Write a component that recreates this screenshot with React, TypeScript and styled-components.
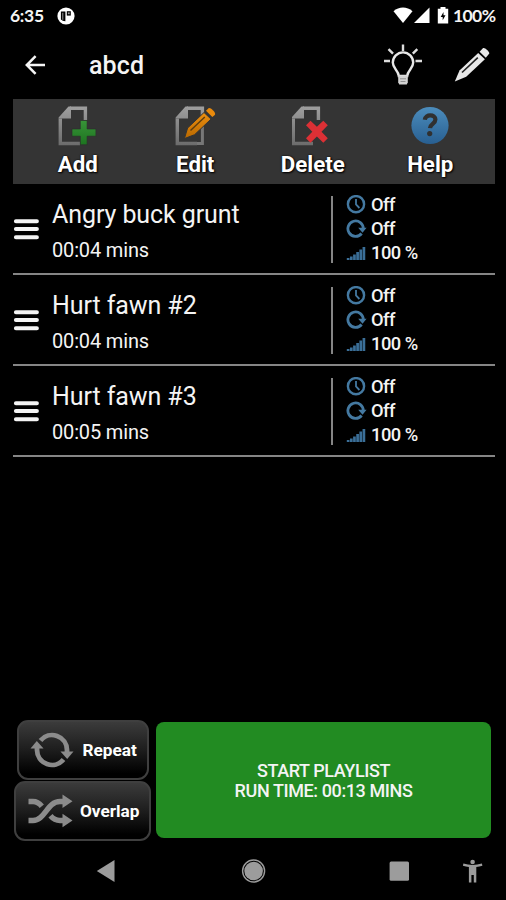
import React from 'react';
import styled, { createGlobalStyle } from 'styled-components';

const GlobalStyle = createGlobalStyle`
  * { box-sizing: border-box; }
  html, body { margin: 0; background: #000; }
  body { font-family: Roboto, "Liberation Sans", sans-serif; color: #f4f4f4; }
  button { font: inherit; color: inherit; border: 0; background: none; padding: 0; margin: 0; }
  svg { display: block; flex: none; }
`;

const Screen = styled.div`
  width: 506px;
  height: 900px;
  background: #000;
  display: flex;
  flex-direction: column;
  overflow: hidden;
  white-space: nowrap;
`;

const StatusBar = styled.div`
  height: 32px;
  flex: none;
  display: flex;
  align-items: center;
  padding: 0 9px 0 10px;
  font: 700 17.5px/32px Lato, sans-serif;
`;

const Clock = styled.span`
  width: 47px;
  letter-spacing: -0.3px;
`;

const StatusIcons = styled.div`
  margin-left: auto;
  display: flex;
  align-items: center;
`;

const BatteryText = styled.span`
  margin-left: 4px;
  width: 44px;
  letter-spacing: -0.6px;
`;

const Header = styled.header`
  height: 67px;
  flex: none;
  display: flex;
  align-items: center;
  padding: 0 15px 1px 22px;
`;

const Title = styled.h1`
  margin: 2px auto 0 41px;
  font-size: 25px;
  line-height: 30px;
  font-weight: 500;
  letter-spacing: 0.1px;
`;

const IconButton = styled.button<{ $gap?: number }>`
  margin-left: ${({ $gap = 0 }) => $gap}px;
`;

const Toolbar = styled.nav`
  height: 85px;
  flex: none;
  margin: 0 11px 0 13px;
  padding: 6px 6px 0;
  background: #343434;
  display: grid;
  grid-template-columns: repeat(4, 1fr);
`;

const Tool = styled.button`
  display: flex;
  flex-direction: column;
  align-items: center;
  gap: 5px;
`;

const ToolLabel = styled.span`
  font-size: 22.3px;
  line-height: 26px;
  font-weight: 700;
  color: #fff;
  text-shadow: 1px 1px 2px #000, 0 0 2px #000;
`;

const List = styled.main`
  flex: 1;
  margin: 0 11px 0 13px;
`;

const Row = styled.article`
  height: 91px;
  border-bottom: 2px solid #858585;
  display: grid;
  grid-template-columns: 39px 279px 15px 1fr;
`;

const Handle = styled.div`
  padding-top: 33px;
`;

const TrackText = styled.div`
  padding-top: 16px;
`;

const TrackName = styled.div`
  font-size: 25px;
  line-height: 30px;
  letter-spacing: -0.08px;
`;

const Duration = styled.div`
  margin-top: 8px;
  font-size: 20px;
  line-height: 24px;
  letter-spacing: -0.15px;
`;

const Divider = styled.div`
  width: 2px;
  height: 67px;
  margin-top: 12px;
  background: #858585;
`;

const Stats = styled.div`
  padding-top: 9px;
`;

const Stat = styled.div`
  height: 24px;
  display: flex;
  align-items: center;
  gap: 4px;
  font-size: 18.3px;
  line-height: 24px;
  font-weight: 500;
  letter-spacing: -0.5px;
`;

const Footer = styled.footer`
  height: 122px;
  flex: none;
  display: flex;
  gap: 5px;
  padding: 0 15px 0 14px;
`;

const Toggles = styled.div`
  width: 137px;
  display: flex;
  flex-direction: column;
  align-items: center;
  gap: 1px;
`;

const Toggle = styled.button<{ $width: number; $gap: number }>`
  width: ${({ $width }) => $width}px;
  height: 60px;
  display: flex;
  align-items: center;
  gap: ${({ $gap }) => $gap}px;
  padding-left: 11px;
  border: 2px solid #3f3f3f;
  border-radius: 11px;
  background: linear-gradient(#3b3b3b, #1d1d1d 50%, #000 92%);
  font-size: 17.2px;
  line-height: 20px;
  font-weight: 700;
  color: #fff;
`;

const StartButton = styled.button`
  flex: 1;
  height: 116px;
  margin-top: 2px;
  padding-top: 2px;
  border-radius: 8px;
  background: #228b22;
  font-size: 18px;
  line-height: 20px;
  font-weight: 500;
  letter-spacing: -0.4px;
`;

const NavBar = styled.div`
  height: 58px;
  flex: none;
  display: grid;
  grid-template-columns: 212px 83px 166px 1fr;
`;

const NavItem = styled.button<{ $pad: number }>`
  display: flex;
  padding: 16px 0 0 ${({ $pad }) => $pad}px;
`;

const Page = () => (
  <>
    <path d="M12 2.3H27.4V14M22 37.5H2.3V12.5" fill="none" stroke="url(#pageFill)" strokeWidth="3.4" />
    <path d="M.6 11.5 10.5 .6H13v12H.6z" fill="url(#pageFill)" />
  </>
);

const Gradients = () => (
  <defs>
    <linearGradient id="pageFill" gradientUnits="userSpaceOnUse" x1="0" y1="0" x2="0" y2="39">
      <stop stopColor="#a0a0a0" /><stop offset="1" stopColor="#6c6c6c" />
    </linearGradient>
    <linearGradient id="orange" x1="0" y1="0" x2="0" y2="1">
      <stop stopColor="#ee9010" /><stop offset="1" stopColor="#b86800" />
    </linearGradient>
    <linearGradient id="blue" x1="0" y1="0" x2="0" y2="1">
      <stop stopColor="#4c8dbd" /><stop offset="1" stopColor="#285f91" />
    </linearGradient>
    <linearGradient id="green" x1="0" y1="0" x2="0" y2="1">
      <stop stopColor="#389438" /><stop offset="1" stopColor="#1d7420" />
    </linearGradient>
  </defs>
);

const AddIcon = () => (
  <svg width="40" height="41" viewBox="0 -1 40 41">
    <Gradients /><Page />
    <path d="M22.3 14.5h6.8v8.500h8.800v7.200h-8.800v8.500h-6.800v-8.500H14v-7.200h8.300z" fill="url(#green)" stroke="#2c2c2c" strokeWidth=".6" />
  </svg>
);

const EditIcon = () => (
  <svg width="42" height="41" viewBox="-1 -1 42 41">
    <Page /><path d="M22 37.5h5.400V19" fill="none" stroke="#777" strokeWidth="3" />
    <path d="M9.4 32.6 12.6 22 29 6.5l7 6.6L19.6 28.7z" fill="url(#orange)" stroke="#333" strokeWidth="1" />
    <path d="m31 4.8 2.6-2.5c1.5-1.4 8 4.6 6.2 6.6L37.3 11z" fill="#e98a0c" />
    <path d="M15.5 24.5 29.8 11" stroke="#5b3c10" strokeWidth="1.4" />
  </svg>
);

const DeleteIcon = () => (
  <svg width="41" height="41" viewBox="1 -1 41 41">
    <Page />
    <path d="m19.5 14.8 6.4 6 6.4-6 4.5 4.500-6.300 6.400 6.300 6.500-4.500 4.500-6.400-6.200-6.400 6.200-4.500-4.500 6.300-6.500L15 19.300z" fill="#dc3035" />
  </svg>
);

const HelpIcon = () => (
  <svg width="40" height="41" viewBox="-1 -1 40 41">
    <circle cx="19" cy="19.5" r="18.6" fill="url(#blue)" />
    <path d="M13.8 13.8C14.4 7.8 24.4 8 24.4 13.6c0 4.4-5.2 4.3-5.4 8.6" fill="none" stroke="#303030" strokeWidth="4.2" />
    <circle cx="18.7" cy="27.6" r="2.6" fill="#303030" />
  </svg>
);

const ClockIcon = () => (
  <svg width="21" height="20" viewBox="0 0 21 20">
    <circle cx="10" cy="9.2" r="8.1" fill="none" stroke="#4479a1" strokeWidth="2.4" />
    <path d="M10 4v5.5l3.4 3.5" fill="none" stroke="#4479a1" strokeWidth="1.8" />
  </svg>
);

const LoopIcon = () => (
  <svg width="21" height="20" viewBox="0 0 21 20">
    <path d="M15.6 14.5a7.700 7.700 0 1 1 1.700-4.500" fill="none" stroke="#4479a1" strokeWidth="2.8" />
    <path d="M12.2 8.800H20.600L16.500 13.800z" fill="#4479a1" />
  </svg>
);

const VolumeIcon = () => (
  <svg width="21" height="20" viewBox="0 0 21 20">
    {[2, 3.5, 5.5, 8, 10.5, 13].map((h, i) => (
      <rect key={h} x={0.8 + i * 3.15} y={17 - h} width="2.7" height={h} fill="#3b6f98" />
    ))}
  </svg>
);

const tools = [
  { label: 'Add', Icon: AddIcon },
  { label: 'Edit', Icon: EditIcon },
  { label: 'Delete', Icon: DeleteIcon },
  { label: 'Help', Icon: HelpIcon },
];

const tracks = [
  { name: 'Angry buck grunt', time: '00:04 mins' },
  { name: 'Hurt fawn #2', time: '00:04 mins' },
  { name: 'Hurt fawn #3', time: '00:05 mins' },
];

export default function App() {
  return (
    <>
      <GlobalStyle />
      <Screen>
        <StatusBar>
          <Clock>6:35</Clock>
          <svg width="18" height="18" viewBox="0 0 18 18">
            <circle cx="9" cy="9" r="8.6" fill="#fff" />
            <path d="M3.9 4.4h4.5v9.8a6 6 0 0 1-4.5-1.8z" fill="#000" />
            <path d="M5.8 5.8v7" stroke="#999" strokeWidth="1" />
            <path d="M9.8 4.2h4v4.4h-4z" fill="#000" />
            <path d="M10.9 5.4h1.8v1.8h-1.8z" fill="#999" />
          </svg>
          <StatusIcons>
            <svg width="56" height="20" viewBox="0 0 56 20">
              <path d="M.5 5.2C6 .2 14 .2 19.5 5.2L10 17z" fill="#fff" />
              <path d="M36.5 1.5V17H21z" fill="#fff" />
              <path d="M47.5 1h5v1.800h2.700V17.500H44.800V2.800h2.700z" fill="#fff" />
              <path d="M50.5 6 47.7 11h2v3.200l2.800-4.900h-2z" fill="#000" />
            </svg>
            <BatteryText>100%</BatteryText>
          </StatusIcons>
        </StatusBar>
        <Header>
          <IconButton aria-label="Back">
            <svg width="26" height="24" viewBox="0 0 26 24">
              <path d="M23 12H4.8M13.600 3.200 4.800 12l8.800 8.800" fill="none" stroke="#f5f5f5" strokeWidth="2.5" />
            </svg>
          </IconButton>
          <Title>abcd</Title>
          <IconButton aria-label="Tips">
            <svg width="40" height="44" viewBox="0 0 40 44">
              <path d="M19 1.5v6.500M4.500 6.200l4.500 4.500M33.300 6.200l-4.500 4.500M-.2 18h6.200M31.500 18H38" stroke="#ddd" strokeWidth="2.4" />
              <path d="M14.8 33C14.300 27 8.800 25.600 8.800 19.600a10.200 10.200 0 0 1 20.400 0C29.200 25.600 23.700 27 23.200 33z" fill="none" stroke="#e8e8e8" strokeWidth="2.4" />
              <path d="M14.2 32.500h9.600v6.800L22.800 41.600h-7.600l-1-2.300z" fill="#d2d2d2" />
              <path d="M16 35.800h6M16.500 38.500h5" stroke="#888" strokeWidth=".9" />
            </svg>
          </IconButton>
          <IconButton aria-label="Rename" $gap={30}>
            <svg width="37" height="37" viewBox="0 0 37 37">
              <path d="M.8 34.5 5.500 23.500 24.200 6l6.700 6.300L12.200 29.700z" fill="#e8e8e8" />
              <path d="m25.600 4.700 3.500-3.600c1.400-1.300 7.400 4.100 6 5.700l-3.300 4z" fill="#e8e8e8" />
              <path d="M8 25.500 23.800 10.700" stroke="#222" strokeWidth="1.6" />
            </svg>
          </IconButton>
        </Header>
        <Toolbar>
          {tools.map(({ label, Icon }) => (
            <Tool key={label}><Icon /><ToolLabel>{label}</ToolLabel></Tool>
          ))}
        </Toolbar>
        <List>
          {tracks.map((track) => (
            <Row key={track.name}>
              <Handle>
                <svg width="27" height="24" viewBox="0 0 27 24">
                  <path d="M2.9 4.2h21M2.900 12.100h21M2.900 20.200h21" stroke="#f4f4f4" strokeWidth="4" strokeLinecap="round" />
                </svg>
              </Handle>
              <TrackText>
                <TrackName>{track.name}</TrackName>
                <Duration>{track.time}</Duration>
              </TrackText>
              <Divider />
              <Stats>
                <Stat><ClockIcon />Off</Stat>
                <Stat><LoopIcon />Off</Stat>
                <Stat><VolumeIcon />100 %</Stat>
              </Stats>
            </Row>
          ))}
        </List>
        <Footer>
          <Toggles>
            <Toggle $width={132} $gap={9}>
              <svg width="44" height="40" viewBox="0 0 44 40">
                <g fill="none" stroke="#8b8b8b" strokeWidth="4.8">
                  <path d="M10.5 10.500A15 15 0 0 1 37 20v3" />
                  <path d="M33.5 29.500A15 15 0 0 1 7 20v-3" />
                </g>
                <path d="M30.5 21.500h13L37.200 29z" fill="#8b8b8b" />
                <path d="M.5 18.500h13L6.800 11z" fill="#8b8b8b" />
              </svg>
              Repeat
            </Toggle>
            <Toggle $width={137} $gap={7}>
              <svg width="46" height="36" viewBox="0 0 46 36">
                <g fill="none" stroke="#8b8b8b" strokeWidth="5.4">
                  <path d="M1.5 27.500H6C18 27.500 20 8.500 33 8.500h5" />
                  <path d="M1.5 8.500H6c3.800 0 6.600 2 8.800 4.700" />
                  <path d="M23.5 22.800c2.500 3 5.500 4.700 9.500 4.700h5" />
                </g>
                <path d="M35.5 1.500 45.500 8.300 35.500 15zM35.500 20.700 45.500 27.500 35.500 34.300z" fill="#8b8b8b" />
              </svg>
              Overlap
            </Toggle>
          </Toggles>
          <StartButton>
            <div>START PLAYLIST</div>
            <div>RUN TIME: 00:13 MINS</div>
          </StartButton>
        </Footer>
        <NavBar>
          <NavItem $pad={96} aria-label="Back">
            <svg width="20" height="26" viewBox="0 0 20 26"><path d="M18.5 2v22L.8 13z" fill="#9c9c9c" /></svg>
          </NavItem>
          <NavItem $pad={29} aria-label="Home">
            <svg width="26" height="26" viewBox="0 0 26 26">
              <circle cx="12.6" cy="13" r="11" fill="none" stroke="#9c9c9c" strokeWidth="1.4" />
              <circle cx="12.6" cy="13" r="9.3" fill="#9c9c9c" />
            </svg>
          </NavItem>
          <NavItem $pad={94} aria-label="Recents">
            <svg width="22" height="26" viewBox="0 0 22 26"><rect x=".6" y="3.6" width="19.4" height="19.2" rx="1.5" fill="#9c9c9c" /></svg>
          </NavItem>
          <NavItem $pad={1} aria-label="Accessibility">
            <svg width="22" height="26" viewBox="0 0 22 26" fill="#9c9c9c">
              <circle cx="10.6" cy="4" r="2.3" />
              <path d="M1.4 5.600C7.500 7.400 13.700 7.400 19.900 5.600l.5 2.100c-2 .6-4 1-6.100 1.200V24.500h-2.500V17H9.400v7.500H6.900V8.900C4.900 8.700 2.900 8.300.9 7.700z" />
            </svg>
          </NavItem>
        </NavBar>
      </Screen>
    </>
  );
}
